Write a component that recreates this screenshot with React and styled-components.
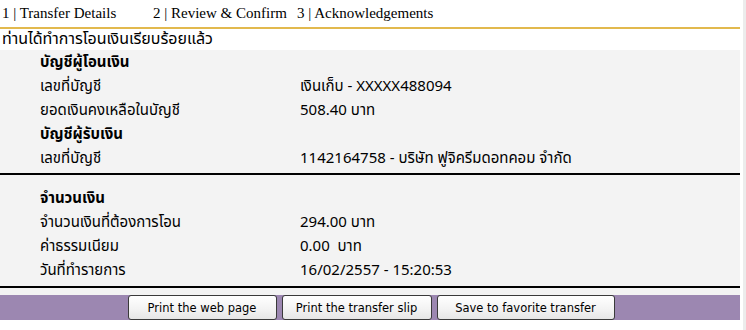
import React from "react";
import styled, { createGlobalStyle } from "styled-components";

const Global = createGlobalStyle`
  html, body { margin: 0; padding: 0; background: #fff; }
  body { font-family: Tahoma, "Noto Sans Thai", "Noto Sans", "DejaVu Sans", sans-serif; }
`;

const Page = styled.div`
  width: 746px;
  height: 330px;
  display: flex;
  overflow: hidden;
`;

const Main = styled.div`
  width: 740px;
  display: flex;
  flex-direction: column;
`;

const Scroll = styled.div`
  width: 3px;
  margin-left: 3px;
  background: #ececec;
`;

const Tabs = styled.div`
  height: 29px;
  display: flex;
  align-items: center;
  border-bottom: 2px solid #e2b94e;
  font-family: "Liberation Serif", serif;
  font-size: 15px;
  color: #000;
  box-sizing: border-box;
  padding-left: 2px;
`;

const Tab = styled.span`
  width: ${(p) => p.w}px;
  white-space: nowrap;
`;

const Message = styled.div`
  height: 21px;
  line-height: 21px;
  font-size: 16px;
  padding-left: 2px;
`;

const Panel = styled.div`
  background: #f3f3f3;
  display: flex;
  flex-direction: column;
`;

const Section = styled.div`
  padding: ${(p) => p.pad};
  border-bottom: 2px solid #000;
`;

const Row = styled.div`
  display: grid;
  grid-template-columns: 260px 1fr;
  height: 24px;
  align-items: center;
  padding-left: 40px;
  font-size: 15px;
  color: #000;
`;

const Heading = styled(Row)`
  font-weight: bold;
`;

const Tail = styled.div`
  height: 7px;
  background: #f3f3f3;
`;

const Bar = styled.div`
  height: 25px;
  background: #9c87b1;
  display: flex;
  justify-content: center;
  gap: 5px;
  padding-left: 2px;
`;

const Button = styled.button`
  width: ${(p) => p.w}px;
  height: 25px;
  border: 1px solid #3a3a3a;
  border-radius: 3px;
  background: linear-gradient(#ffffff, #f2f2f2 60%, #e6e6e6);
  font-family: "DejaVu Sans", Verdana, sans-serif;
  font-size: 11.5px;
  color: #000;
  padding: 0;
`;

export default function App() {
  return (
    <Page>
      <Global />
      <Main>
        <Tabs>
          <Tab w={151}>1 | Transfer Details</Tab>
          <Tab w={144}>2 | Review &amp; Confirm</Tab>
          <Tab w={160}>3 | Acknowledgements</Tab>
        </Tabs>
        <Message>ท่านได้ทำการโอนเงินเรียบร้อยแล้ว</Message>
        <Panel>
          <Section pad="0 0 3px 0">
            <Heading><span>บัญชีผู้โอนเงิน</span><span /></Heading>
            <Row><span>เลขที่บัญชี</span><span>เงินเก็บ - XXXXX488094</span></Row>
            <Row><span>ยอดเงินคงเหลือในบัญชี</span><span>508.40 บาท</span></Row>
            <Heading><span>บัญชีผู้รับเงิน</span><span /></Heading>
            <Row><span>เลขที่บัญชี</span><span>1142164758 - บริษัท ฟูจิครีมดอทคอม จำกัด</span></Row>
          </Section>
          <Section pad="11px 0 4px 0">
            <Heading><span>จำนวนเงิน</span><span /></Heading>
            <Row><span>จำนวนเงินที่ต้องการโอน</span><span>294.00 บาท</span></Row>
            <Row><span>ค่าธรรมเนียม</span><span>0.00&nbsp; บาท</span></Row>
            <Row><span>วันที่ทำรายการ</span><span>16/02/2557 - 15:20:53</span></Row>
          </Section>
          <Tail />
        </Panel>
        <Bar>
          <Button w={149}>Print the web page</Button>
          <Button w={150}>Print the transfer slip</Button>
          <Button w={178}>Save to favorite transfer</Button>
        </Bar>
      </Main>
      <Scroll />
    </Page>
  );
}
